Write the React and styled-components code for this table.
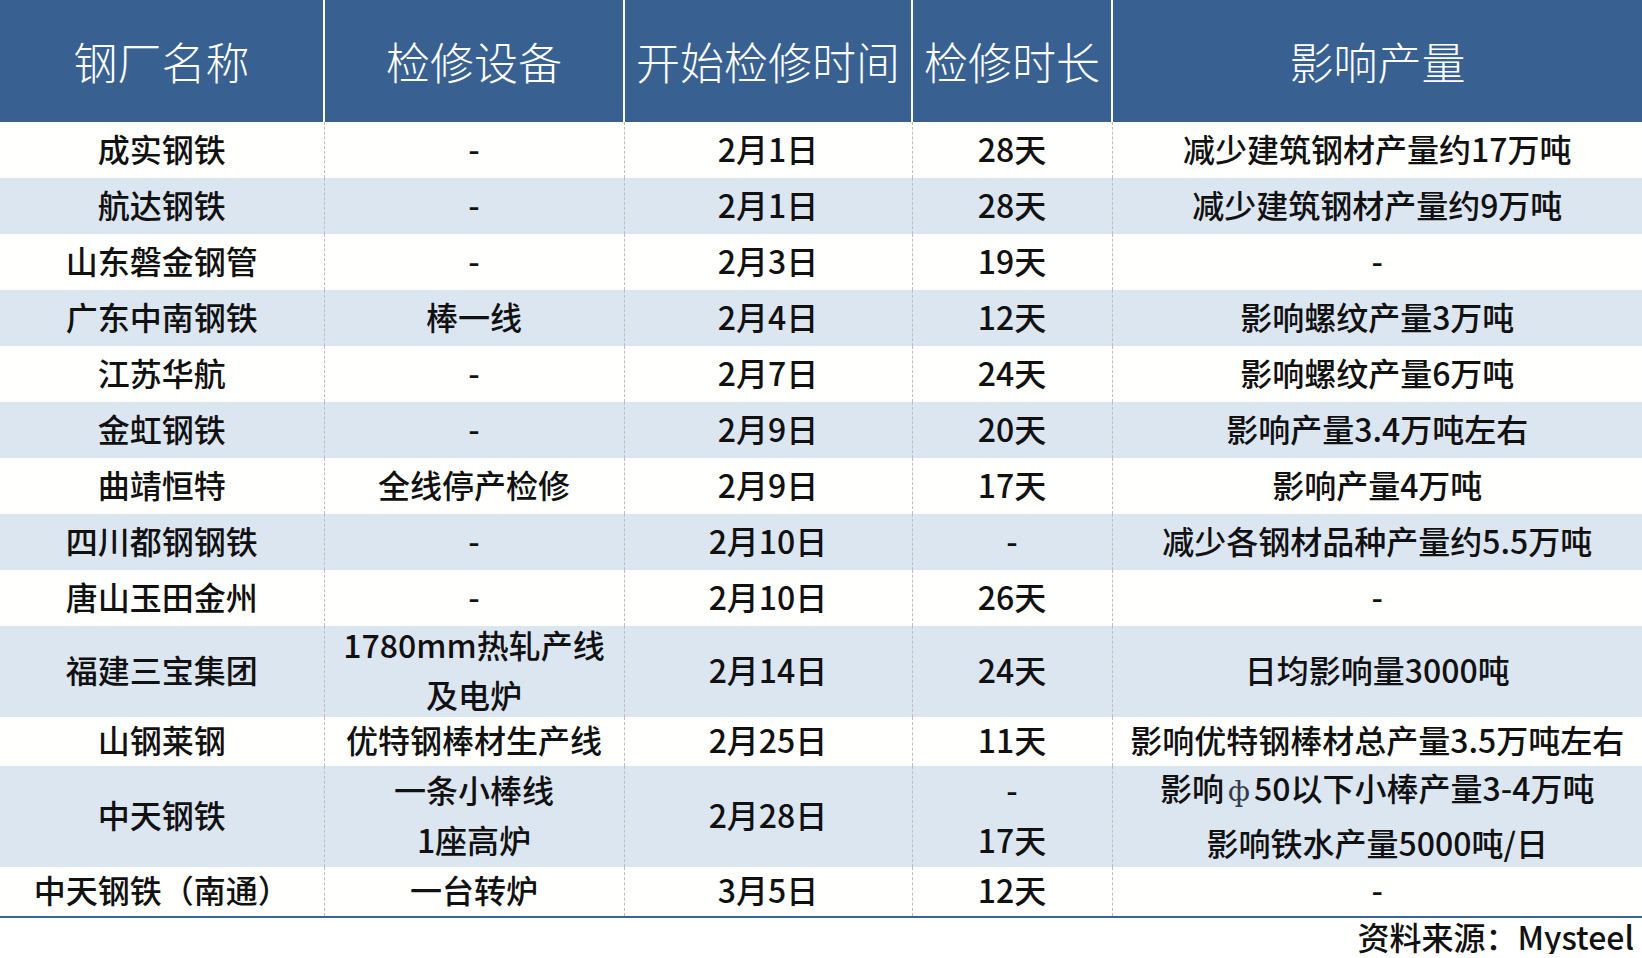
import React from "react";
import styled, { createGlobalStyle } from "styled-components";

const GlobalStyle = createGlobalStyle`
  html, body {
    margin: 0;
    padding: 0;
    background: #ffffff;
  }
  body {
    font-family: "Noto Sans CJK SC", "Noto Sans", sans-serif;
  }
`;

const Page = styled.div`
  width: 1642px;
  display: flex;
  flex-direction: column;
`;

const Table = styled.table`
  width: 1642px;
  table-layout: fixed;
  border-collapse: collapse;
  border-spacing: 0;
  border-bottom: 2px solid #3a6396;
`;

const Th = styled.th`
  height: 122px;
  padding: 0;
  background: #386192;
  color: #ffffff;
  font-size: 44px;
  font-weight: 300;
  text-align: center;
  vertical-align: middle;
  white-space: nowrap;
  border-left: 2px solid #ffffff;
  &:first-child {
    border-left: none;
  }
`;

const Row = styled.tr`
  background: ${(p) => (p.$alt ? "#dce6f1" : "#fffffd")};
`;

const Td = styled.td`
  padding: 0 0 5px;
  color: #111111;
  font-size: 32px;
  font-weight: 500;
  line-height: 40px;
  text-align: center;
  vertical-align: middle;
  white-space: nowrap;
  border-left: 1px dashed #bdbdbd;
  &:first-child {
    border-left: none;
  }
`;

const Line = styled.div`
  line-height: 36px;
  & + & {
    margin-top: ${(p) => p.$gap - 36}px;
  }
`;

const Phi = styled.span`
  font-family: "DejaVu Serif", serif;
  font-weight: 300;
  color: #333a4a;
  font-size: 28px;
  margin: 0 4px;
`;

const Source = styled.div`
  align-self: flex-end;
  padding-right: 8px;
  font-size: 32px;
  font-weight: 500;
  line-height: 36px;
  color: #111111;
`;

const headings = ["钢厂名称", "检修设备", "开始检修时间", "检修时长", "影响产量"];
const widths = [324, 300, 288, 200, 530];

const rows = [
  { h: 56, cells: ["成实钢铁", "-", "2月1日", "28天", "减少建筑钢材产量约17万吨"] },
  { h: 56, cells: ["航达钢铁", "-", "2月1日", "28天", "减少建筑钢材产量约9万吨"] },
  { h: 56, cells: ["山东磐金钢管", "-", "2月3日", "19天", "-"] },
  { h: 56, cells: ["广东中南钢铁", "棒一线", "2月4日", "12天", "影响螺纹产量3万吨"] },
  { h: 56, cells: ["江苏华航", "-", "2月7日", "24天", "影响螺纹产量6万吨"] },
  { h: 56, cells: ["金虹钢铁", "-", "2月9日", "20天", "影响产量3.4万吨左右"] },
  { h: 56, cells: ["曲靖恒特", "全线停产检修", "2月9日", "17天", "影响产量4万吨"] },
  { h: 56, cells: ["四川都钢钢铁", "-", "2月10日", "-", "减少各钢材品种产量约5.5万吨"] },
  { h: 56, cells: ["唐山玉田金州", "-", "2月10日", "26天", "-"] },
  { h: 90, gap: 48, cells: ["福建三宝集团", ["1780mm热轧产线", "及电炉"], "2月14日", "24天", "日均影响量3000吨"] },
  { h: 49, cells: ["山钢莱钢", "优特钢棒材生产线", "2月25日", "11天", "影响优特钢棒材总产量3.5万吨左右"] },
  {
    h: 101,
    gap: 50,
    cells: [
      "中天钢铁",
      ["一条小棒线", "1座高炉"],
      "2月28日",
      ["-", "17天"],
      [
        <>
          影响<Phi>ф</Phi>50以下小棒产量3-4万吨
        </>,
        "影响铁水产量5000吨/日",
      ],
    ],
  },
  { h: 50, cells: ["中天钢铁（南通）", "一台转炉", "3月5日", "12天", "-"] },
];

export default function App() {
  return (
    <Page>
      <GlobalStyle />
      <Table>
        <colgroup>
          {widths.map((w, i) => (
            <col key={i} style={{ width: w }} />
          ))}
        </colgroup>
        <thead>
          <tr>
            {headings.map((t) => (
              <Th key={t}>{t}</Th>
            ))}
          </tr>
        </thead>
        <tbody>
          {rows.map((r, index) => (
            <Row key={index} $alt={index % 2 === 1} style={{ height: r.h }}>
              {r.cells.map((c, j) => (
                <Td key={j}>
                  {Array.isArray(c)
                    ? c.map((line, k) => (
                        <Line key={k} $gap={r.gap}>
                          {line}
                        </Line>
                      ))
                    : c}
                </Td>
              ))}
            </Row>
          ))}
        </tbody>
      </Table>
      <Source>资料来源：Mysteel</Source>
    </Page>
  );
}
